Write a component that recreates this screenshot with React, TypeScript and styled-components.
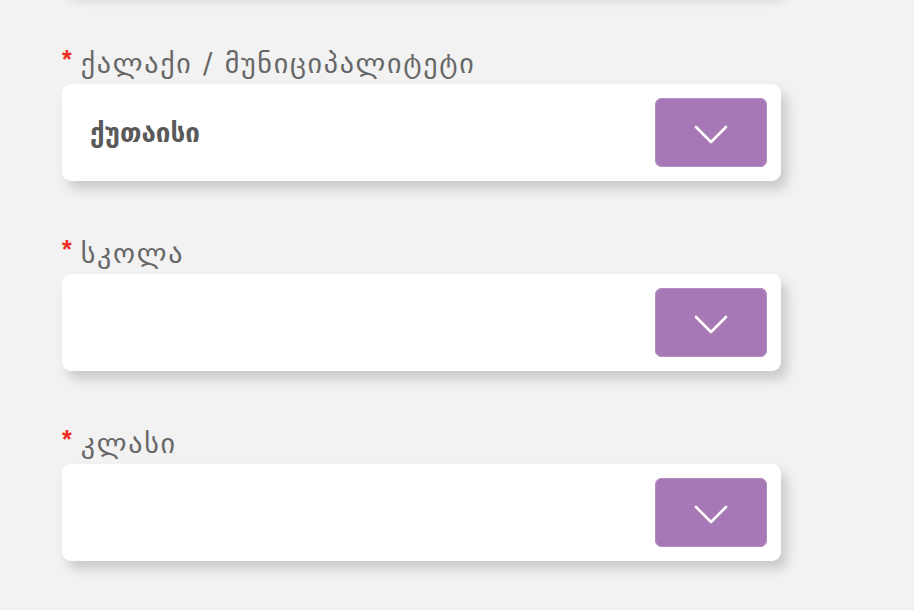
import React from "react";
import styled, { createGlobalStyle } from "styled-components";

const Global = createGlobalStyle`
  html, body { margin: 0; padding: 0; background: #f2f2f2; }
  body { font-family: "DejaVu Sans", "Noto Sans", sans-serif; overflow: hidden; }
`;

const Page = styled.div`
  width: 914px;
  height: 610px;
  overflow: hidden;
  background: #f2f2f2;
`;

const Column = styled.div`
  margin-top: -106px;
  margin-left: 62px;
  width: 719px;
  display: flex;
  flex-direction: column;
  gap: 59px;
`;

const Field = styled.div`
  display: flex;
  flex-direction: column;
`;

const Label = styled.div`
  height: 34px;
  display: flex;
  align-items: flex-start;
  gap: 9px;
  color: #676767;
  font-size: 28px;
  line-height: 28px;
  letter-spacing: 1.7px;
  white-space: nowrap;
`;

const Star = styled.span`
  color: #ee2b1f;
  font-family: "Liberation Sans", sans-serif;
  font-weight: 700;
  font-size: 25px;
  line-height: 18px;
  letter-spacing: 0;
`;

const Card = styled.div`
  height: 97px;
  flex-shrink: 0;
  background: #ffffff;
  border-radius: 9px;
  box-shadow: 6px 8px 12px rgba(0, 0, 0, 0.17);
  display: flex;
  align-items: center;
  justify-content: space-between;
  padding: 0 14px 0 28px;
  box-sizing: border-box;
`;

const Value = styled.span`
  color: #5a5a5a;
  font-size: 26px;
  font-weight: 700;
`;

const Toggle = styled.div`
  width: 112px;
  height: 69px;
  border-radius: 7px;
  background: #a678b5;
  box-shadow: inset 0 0 0 1px #b58fc3;
  display: flex;
  align-items: center;
  justify-content: center;
  padding-top: 4px;
  box-sizing: border-box;
`;

const Chevron = () => (
  <svg width="34" height="20" viewBox="0 0 34 20">
    <polyline
      points="2,2 17,17 32,2"
      fill="none"
      stroke="#ffffff"
      strokeWidth="2.6"
      strokeLinecap="round"
      strokeLinejoin="round"
    />
  </svg>
);

const fields = [
  { label: "ქალაქი / მუნიციპალიტეტი", value: "ქუთაისი" },
  { label: "სკოლა", value: "" },
  { label: "კლასი", value: "" },
];

export default function App() {
  return (
    <Page>
      <Global />
      <Column>
        <Card />
        {fields.map((f) => (
          <Field key={f.label}>
            <Label>
              <Star>*</Star>
              <span>{f.label}</span>
            </Label>
            <Card>
              <Value>{f.value}</Value>
              <Toggle>
                <Chevron />
              </Toggle>
            </Card>
          </Field>
        ))}
      </Column>
    </Page>
  );
}
